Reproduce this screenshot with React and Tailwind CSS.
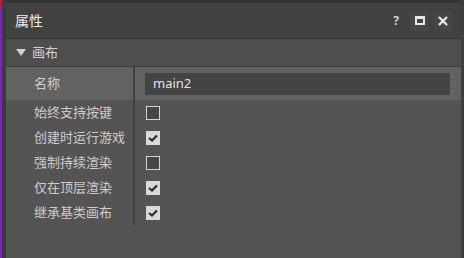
import React from 'react';

const rows = [
  { label: '始终支持按键', checked: false },
  { label: '创建时运行游戏', checked: true },
  { label: '强制持续渲染', checked: false },
  { label: '仅在顶层渲染', checked: true },
  { label: '继承基类画布', checked: true },
];

const font = { fontFamily: '"Noto Sans", "Noto Sans CJK SC", sans-serif' };

const Checkbox = ({ checked }) =>
  checked ? (
    <div className="w-[14px] h-[14px] bg-[#d9d9d9] flex items-center justify-center">
      <svg width="14" height="14" viewBox="0 0 14 14">
        <path d="M3 7 L6 9.5 L11 4.5" fill="none" stroke="#2a2a2a" strokeWidth="2.2" />
      </svg>
    </div>
  ) : (
    <div className="w-[14px] h-[14px] bg-[#454545] border border-[#d4d4d4]" />
  );

const App = () => {
  return (
    <div className="w-[464px] h-[258px] flex bg-[#545454] overflow-hidden" style={font}>
      {/* left edge strip */}
      <div className="w-[2px] flex flex-col">
        <div className="h-[7px] bg-[#d0103a]" />
        <div className="flex-1 bg-[#7a22c8]" />
      </div>
      <div className="w-[4px] bg-[#3b3b3b]" />

      <div className="flex-1 flex flex-col border-t-[3px] border-[#333333]">
        {/* title bar */}
        <div className="h-[36px] bg-[#414141] border-b border-[#333333] flex items-center pl-[9px] pr-[9px]">
          <span className="text-[14px] text-[#ececec] leading-none">属性</span>
          <div className="ml-auto flex items-center">
            <span className="text-[12px] font-bold text-[#cfcfcf] mr-[11px] leading-none">?</span>
            <div className="w-[19px] h-[20px] bg-[#464646] flex items-center justify-center mr-[5px]">
              <div className="w-[10px] h-[9px] border-2 border-t-[3px] border-[#e6e6e6]" />
            </div>
            <div className="w-[18px] h-[20px] bg-[#464646] flex items-center justify-center">
              <svg width="10" height="10" viewBox="0 0 10 10">
                <path d="M1 1 L9 9 M9 1 L1 9" stroke="#ececec" strokeWidth="2.2" />
              </svg>
            </div>
          </div>
        </div>

        {/* section header */}
        <div className="h-[28px] bg-[#4e4e4e] border-b border-[#3e3e3e] flex items-center pl-[10px]">
          <svg width="10" height="8" viewBox="0 0 10 8" className="mr-[6px]">
            <path d="M0 0 L10 0 L5 7 Z" fill="#d0d0d0" />
          </svg>
          <span className="text-[13px] text-[#d4d4d4] leading-none">画布</span>
        </div>

        {/* properties */}
        <div className="flex flex-col">
          <div className="h-[33px] bg-[#626262] flex">
            <div className="w-[129px] border-r-2 border-[#404040] flex items-center pl-[28px]">
              <span className="text-[13px] text-[#cfcfcf]">名称</span>
            </div>
            <div className="flex-1 flex items-center pl-[10px] pr-[11px]">
              <div className="h-[22px] w-full bg-[#434343] flex items-center pl-[8px]">
                <span className="text-[13px] text-[#e2e2e2]">main2</span>
              </div>
            </div>
          </div>
          {rows.map((r) => (
            <div key={r.label} className="h-[25px] flex">
              <div className="w-[129px] border-r-2 border-[#404040] flex items-center pl-[28px]">
                <span className="text-[13px] text-[#cdcdcd]">{r.label}</span>
              </div>
              <div className="flex-1 flex items-center pl-[11px]">
                <Checkbox checked={r.checked} />
              </div>
            </div>
          ))}
        </div>
      </div>

      <div className="w-[3px] bg-[#3c3f41]" />
    </div>
  );
};

export default App;
